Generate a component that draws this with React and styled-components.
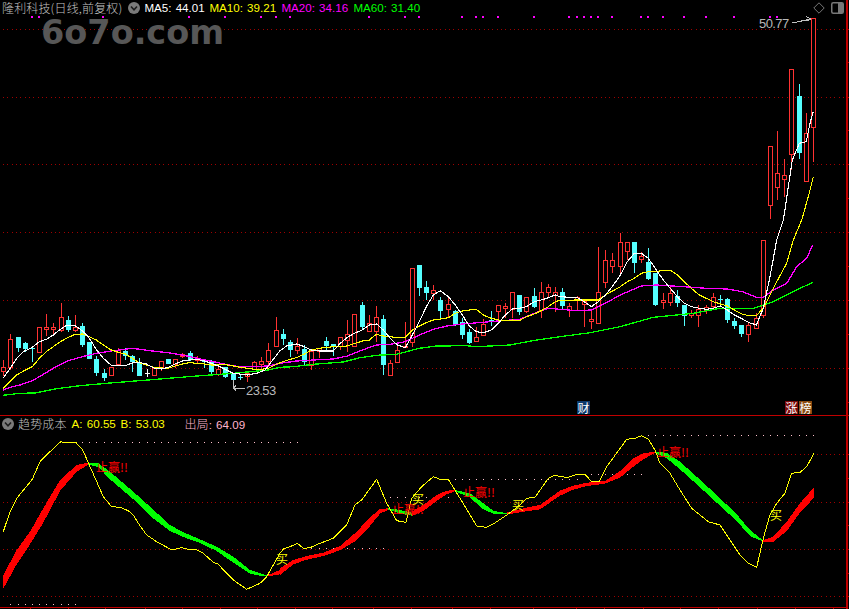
import React from 'react';
import styled, { createGlobalStyle } from 'styled-components';

const RED = '#ff3232';
const CYAN = '#54ffff';
const GRID = '#a00000';
const AXIS = '#c00000';
const CJK = '"Noto Sans CJK SC", "Liberation Sans", sans-serif';
const LATIN = '"Liberation Sans", "Noto Sans CJK SC", sans-serif';

const candleX = i => Math.round(3.33 + i * 7.165);

// all chart data was read off 3x crops, so each run keeps the crop origin
const crop = (ox, oy, list) => list.map(([x, ...ys]) => [ox + x / 3, ...ys.map(y => oy + y / 3)]);

const candleRuns = [
    [290, [
        ['R',210,258,232,245],['R',132,240,148,232],['C',140,185,140,175],['C',155,185,160,178],['C',170,215,173,178],
        ['R',112,188,112,188],['R',72,138,112,118],['R',98,135,112,117],['R',40,125,82,122],['C',78,125,90,120],
        ['R',75,125,112,120],['C',100,170,108,165],['C',155,208,155,206],['C',197,258,207,248],['C',238,272,250,264],
        ['R',232,255,232,255],['R',175,222,182,222],['C',175,210,182,197],['C',195,247,198,216],['C',205,258,220,258],
        ['W',238,262,250,251],['R',232,255,235,255],['R',212,242,214,234],['C',207,222,207,222],['R',207,235,208,222],
        ['R',190,203,193,200],['C',183,212,188,210],['R',198,218,207,210],['C',208,234,213,215],['C',210,258,212,246],
        ['R',222,258,238,252],['C',230,265,232,262],['C',250,298,250,270],['C',255,270,260,262],['R',248,275,250,260],
        ['R',213,240,218,238],['R',200,240,214,224],['R',160,230,181,215],['R',82,168,120,168],
    ]],
    [250, [
        ['C',237,285,252,267],['C',270,320,276,300],['R',265,312,289,302],['C',285,345,297,335],['R',320,360,305,345],
        ['R',295,325,295,305],['C',262,300,273,288],['C',282,318,282,288],['R',262,300,262,290],['R',210,305,253,272],
        ['R',193,290,193,290],['C',156,238,165,232],['R',195,245,220,243],['R',168,275,202,245],['C',195,375,207,345],
        ['R',330,378,340,377],['R',285,340,301,338],['R',215,295,290,292],['R',55,290,55,277],['C',45,138,45,113],
        ['C',93,150,111,128],['R',105,150,122,131],['C',140,205,150,182],['R',145,200,163,179],['C',180,228,182,225],
        ['C',205,268,217,255],['C',237,282,247,278],['R',232,275,262,275],['R',208,258,222,256],['C',183,228,210,212],
        ['R',165,210,165,185],['R',158,205,169,175],['R',125,205,127,177],['C',135,195,135,185],['R',142,190,142,185],
        ['C',113,175,138,170],['R',97,203,127,182],['R',103,145,112,128],['R',112,185,127,137],
    ]],
    [220, [
        ['C',205,268,216,258],['R',250,290,260,270],['R',228,270,232,240],['R',238,320,243,253],['R',270,327,298,305],
        ['R',82,310,217,310],['R',90,205,121,188],['R',98,160,121,139],['R',40,165,67,140],['R',67,120,67,95],
        ['C',67,158,67,128],['R',95,130,108,117],['C',83,180,126,177],['C',160,258,160,255],['R',218,267,240,248],
        ['R',195,257,220,248],['C',210,262,227,248],['C',255,317,255,288],['R',270,295,279,287],['R',255,320,267,287],
        ['R',255,282,262,272],['R',220,268,232,258],['C',225,250,238,241],['C',235,310,237,300],['C',295,327,303,318],
        ['C',315,350,315,342],['R',308,365,315,344],['R',280,327,295,326],['R',60,295,60,285],
    ]],
    [0, [
        ['R',438,657,438,617],['R',393,600,520,563],['R',477,590,525,537],['R',207,510,208,463],['C',252,477,288,460],
        ['R',340,545,400,545],['R',55,487,55,383],
    ]],
];

const candles = candleRuns
    .flatMap(([oy, rows]) => rows.map(([kind, ...ys]) => [kind, ...ys.map(y => oy + y / 3)]))
    .map(([kind, high, low, top, bottom], i) => ({ kind, high, low, top, bottom, x: candleX(i) }));

const ma5 = [
    ...crop(0, 290, [[10,265],[30,235],[50,205],[70,185],[97,172],[118,155],[139,148],[160,135],[181,118],[200,106],[226,108],[247,122],[265,140],[290,180],[310,205],[334,226],[376,227],[397,219],[418,217],[439,222],[463,235],[484,237],[505,232],[526,222],[547,213],[568,210],[592,208],[613,213],[634,220],[655,228],[676,238],[700,250],[742,255],[770,250],[795,240]]),
    ...crop(280, 250, [[0,302],[20,288],[50,282],[73,290],[94,300],[118,303],[160,303],[181,280],[202,262],[223,250],[247,240],[268,225],[290,222],[310,240],[331,265],[352,285],[376,293],[397,255],[418,215],[439,170],[460,135],[481,122],[505,140],[526,165],[547,195],[568,228],[589,245],[610,248],[634,240],[655,220],[676,195],[697,177],[718,175],[739,170],[763,155],[784,150],[805,143],[826,135]]),
    ...crop(560, 220, [[0,230],[52,233],[73,245],[94,260],[115,245],[136,225],[157,200],[181,165],[202,125],[223,100],[244,100],[265,115],[289,150],[310,180],[331,205],[352,230],[373,250],[394,260],[418,265],[439,268],[460,265],[481,258],[502,270],[523,285],[547,297],[568,308],[589,315],[610,265],[630,170],[650,60],[670,0]]),
    ...crop(730, 0, [[165,630],[175,560],[187,480],[208,430],[229,425],[240,370],[250,335]]),
];

const ma10 = [
    ...crop(0, 290, [[10,295],[30,275],[50,255],[76,240],[97,230],[118,205],[139,185],[160,170],[181,155],[205,142],[226,133],[247,132],[268,140],[289,150],[310,165],[334,180],[355,187],[376,192],[397,205],[418,218],[439,225],[463,232],[484,234],[505,235],[526,228],[547,222],[568,218],[592,220],[613,222],[634,225],[655,225],[676,224],[700,228],[721,232],[742,235],[763,238],[784,238],[805,235]]),
    ...crop(280, 250, [[0,338],[31,328],[52,322],[73,312],[94,300],[118,295],[160,290],[202,288],[247,273],[268,270],[289,253],[310,258],[331,260],[352,263],[376,262],[397,240],[418,228],[439,218],[460,210],[481,207],[505,203],[526,190],[547,183],[568,180],[589,178],[610,195],[634,205],[655,210],[676,212],[697,210],[718,212],[739,200],[763,192],[784,182],[805,170],[826,155]]),
    ...crop(560, 220, [[0,241],[52,240],[115,240],[136,225],[181,200],[202,185],[223,175],[244,160],[265,155],[289,155],[310,151],[331,151],[352,165],[373,185],[394,205],[418,225],[439,235],[460,245],[481,252],[502,258],[523,270],[547,283],[568,287],[589,287],[610,265],[630,225],[650,185],[680,130],[700,60],[725,0]]),
    ...crop(730, 0, [[235,590],[250,530]]),
];

const ma20 = [
    ...crop(0, 290, [[10,300],[30,292],[60,285],[97,272],[118,260],[160,235],[205,212],[247,200],[289,190],[334,183],[397,175],[450,182],[505,188],[547,195],[592,205],[655,218],[700,228],[742,230],[805,228]]),
    ...crop(280, 250, [[0,340],[50,333],[100,330],[160,327],[202,318],[247,300],[289,285],[331,283],[376,275],[418,255],[460,238],[505,227],[547,222],[610,217],[655,213],[718,208],[763,190],[805,175]]),
    ...crop(560, 220, [[0,268],[50,272],[94,270],[136,250],[181,225],[244,198],[289,195],[373,200],[439,205],[502,207],[547,215],[589,232],[610,232],[640,210],[680,190],[710,140],[740,115],[758,75]]),
];

const ma60 = [
    ...crop(0, 290, [[10,316],[60,310],[105,309],[170,296],[240,287],[330,279],[418,272],[505,265],[592,258],[700,250],[805,240]]),
    ...crop(280, 250, [[0,352],[40,350],[100,343],[190,336],[240,323],[290,316],[350,313],[418,295],[470,288],[560,287],[590,290],[690,285],[770,270]]),
    ...crop(560, 220, [[0,350],[90,338],[180,320],[280,292],[400,280],[480,265],[580,265],[640,245],[700,215],[758,187]]),
];

const trendLine = [
    ...crop(0, 400, [[10,395],[30,335],[50,295],[75,265],[97,238],[120,185],[150,155],[182,125],[195,128],[228,128],[248,150],[268,195],[290,245],[310,290],[335,320],[360,322],[385,332],[400,345],[415,370],[440,405],[470,425],[510,447],[525,448],[545,443],[565,448],[590,450],[610,460],[640,487],[655,492],[670,510],[700,540],[740,568],[780,550],[800,530]]),
    ...crop(280, 440, [[0,340],[10,327],[30,320],[52,310],[70,325],[90,323],[120,310],[160,295],[200,255],[225,195],[245,180],[290,118],[320,190],[350,242],[378,247],[395,175],[425,140],[460,110],[480,118],[505,118],[540,175],[590,258],[620,262],[640,252],[680,225],[720,195],[740,175],[765,172],[805,115],[825,105]]),
    ...crop(560, 395, [[0,245],[25,247],[50,238],[75,238],[95,260],[118,260],[140,215],[200,133],[225,130],[245,122],[265,132],[285,165],[300,205],[330,235],[360,285],[395,340],[445,380],[480,390],[540,480],[565,505],[590,517],[610,430],[630,360],[650,325],[675,295],[695,235],[720,232],[740,215],[762,175]]),
];

const bands = [
    { up: true, pts: crop(0, 400, [[10,525,566],[50,450,493],[90,395,433],[130,325,368],[180,240,273],[230,195,215],[265,188,194]]) },
    { up: false, pts: crop(0, 400, [[265,188,194],[295,190,201],[330,215,238],[400,275,298],[450,320,348],[510,375,393],[550,397,411],[600,418,429],[650,440,453],[700,470,488],[750,510,521],[790,523,529],[805,526,529]]) },
    { up: true, pts: [...crop(0, 400, [[805,525,529],[840,510,523]]), ...crop(280, 440, [[0,385,405],[40,360,373],[80,348,359],[130,338,348],[180,318,331],[230,275,301],[270,232,258],[300,207,221],[325,205,209]])] },
    { up: false, pts: crop(280, 440, [[325,205,209],[360,210,221],[395,218,227]]) },
    { up: true, pts: crop(280, 440, [[395,215,228],[430,195,213],[470,165,183],[500,152,163],[525,150,154]]) },
    { up: false, pts: crop(280, 440, [[525,150,154],[570,160,173],[610,190,208],[640,212,221],[680,220,223]]) },
    { up: true, pts: [...crop(280, 440, [[680,218,224],[730,205,215],[780,195,208]]), ...crop(560, 395, [[0,287,302],[40,272,284],[80,263,273],[135,258,266],[180,228,248],[220,190,215],[250,175,193],[285,170,174]])] },
    { up: false, pts: crop(560, 395, [[285,170,174],[320,173,190],[360,200,223],[410,245,268],[470,300,323],[530,358,378],[570,405,423],[610,437,440]]) },
    { up: true, pts: crop(560, 395, [[610,436,440],[640,425,440],[680,380,408],[720,325,353],[762,277,308]]) },
];

// pale stop-price dots: one dot per candle at a fixed level
const stopRuns = [
    { y: 442, from: 81, to: 303 }, { y: 604, from: 7, to: 75 }, { y: 548, from: 309, to: 383 },
    { y: 497, from: 389, to: 448 }, { y: 479, from: 454, to: 583 }, { y: 474, from: 590, to: 641 },
    { y: 435, from: 647, to: 813 },
];

const signalDots = [32, 39, 103, 189, 225, 261, 276, 290, 369, 405, 419, 462, 476, 483, 498, 534, 569, 577, 584, 591, 598, 612, 641, 648, 663, 684, 706, 734, 770, 777];

const priceGrid = [29, 97, 164, 232, 300, 368];
const priceTicks = [29, 62, 97, 130, 164, 198, 232, 266, 300, 334, 368, 402];
const costGrid = [454, 502, 549, 596];
const costTicks = [454, 478, 502, 525, 549, 573, 596];
const dateTicks = [30, 68, 105, 145, 182, 220, 257, 295, 332, 373, 411, 452, 490, 533, 576, 604, 643, 680, 718, 757, 795, 833];

const winLabels = [[96, 472], [392, 514], [463, 497], [657, 457]];
const buyLabels = [[276, 564], [412, 504], [512, 510], [770, 520]];

const toPoints = list => list.map(([x, y]) => `${x.toFixed(1)},${y.toFixed(1)}`).join(' ');

// grid dots sit about 4.33px apart, a plain dash array smears them
const dottedRow = y => Array.from({ length: 195 }, (_, i) => `M${Math.round(3 + i * 4.33)} ${y + 0.5}h1`).join('');

const GlobalStyle = createGlobalStyle`
    html, body {
        margin: 0;
        padding: 0;
        background: #000;
    }
`;

const Terminal = styled.div`
    width: 849px;
    height: 609px;
    background: #000;
    overflow: hidden;
    display: grid;
    grid-template-rows: 416px 193px;
`;

const Panel = styled.section`
    position: relative;
    border-bottom: ${props => props.$ruled ? `1px solid ${AXIS}` : 'none'};
`;

const Chart = styled.svg`
    display: block;
    width: 849px;
    height: ${props => props.$height}px;
    shape-rendering: crispEdges;
`;

const Legend = styled.div`
    position: absolute;
    top: ${props => props.$top}px;
    left: 2px;
    right: 0;
    height: 14px;
    display: flex;
    align-items: center;
    font-size: 12px;
    line-height: 14px;
    white-space: nowrap;
`;

const Title = styled.span`
    font-family: ${CJK};
    font-weight: 300;
    letter-spacing: 0.15px;
    color: #c0c0c0;
    margin-left: ${props => props.$gap || 0}px;
`;

const Reading = styled.span`
    font-family: ${LATIN};
    font-size: 11.6px;
    color: ${props => props.$color};
    margin-left: ${props => props.$gap}px;
    width: ${props => props.$width}px;
    word-spacing: 1px;
`;

const CjkLabel = styled.span`
    font-family: ${CJK};
    font-size: 12px;
    font-weight: 300;
`;

const RoundToggle = styled.svg`
    width: 12px;
    height: 12px;
    margin-left: ${props => props.$gap}px;
    flex: none;
`;

const WindowIcons = styled.div`
    margin-left: auto;
    margin-right: 5px;
    display: flex;
    align-items: center;
    gap: 6px;
`;

const Watermark = styled.div`
    position: absolute;
    top: 19px;
    left: 41px;
    font-family: "DejaVu Sans", sans-serif;
    font-weight: 700;
    font-size: 33.5px;
    line-height: 28px;
    color: #575757;
`;

const EventTags = styled.div`
    position: absolute;
    top: 401px;
    height: 13px;
    left: ${props => props.$left}px;
    display: flex;
    gap: 1px;
`;

const EventTag = styled.span`
    width: 13px;
    height: 13px;
    font-family: ${CJK};
    font-size: 12px;
    line-height: 13px;
    text-align: center;
    color: #fff;
    background: ${props => props.$bg};
`;

const PriceNote = styled.text`
    font-family: ${LATIN};
    font-size: 13px;
    letter-spacing: -0.6px;
    fill: #b8b8b8;
`;

const SignalText = styled.text`
    font-family: ${CJK};
    font-size: 12px;
    fill: ${props => props.$color};
`;

const Candle = ({ kind, x, high, low, top, bottom }) => {
    const mid = x + 0.5;
    if (kind === 'C') {
        return (
            <g>
                <line x1={mid} x2={mid} y1={high} y2={low} stroke={CYAN} />
                <rect x={x - 2} y={top} width={5} height={Math.max(bottom - top, 1)} fill={CYAN} />
            </g>
        );
    }
    if (kind === 'W') {
        return (
            <g stroke="#fff">
                <line x1={mid} x2={mid} y1={high} y2={low} />
                <line x1={x - 2} x2={x + 3} y1={top} y2={top} />
            </g>
        );
    }
    return (
        <g stroke={RED}>
            <line x1={mid} x2={mid} y1={high} y2={top} />
            <line x1={mid} x2={mid} y1={bottom} y2={low} />
            <rect x={x - 1.5} y={top} width={4} height={Math.max(bottom - top, 1)} fill="#000" />
        </g>
    );
};

const Grid = ({ rows, ticks }) => (
    <g>
        {rows.map(y => <path key={y} d={dottedRow(y)} stroke={GRID} fill="none" />)}
        <line x1={847} x2={847} y1={0} y2={609} stroke={AXIS} strokeWidth={2} />
        {ticks.map(y => (
            <line key={y} x1={847} x2={849} y1={y + 0.5} y2={y + 0.5} stroke={AXIS} />
        ))}
    </g>
);

const Toggle = ({ gap }) => (
    <RoundToggle $gap={gap} viewBox="0 0 12 12">
        <circle cx="6" cy="6" r="6" fill="#7a7a7a" />
        <path d="M3 4.5 6 7.8 9 4.5" fill="none" stroke="#1c1c1c" strokeWidth="1.6" />
    </RoundToggle>
);

const PriceChart = () => (
    <Chart $height={415} viewBox="0 0 849 415">
        <Grid rows={priceGrid} ticks={priceTicks} />
        {signalDots.map(x => <rect key={x} x={x - 1} y={16} width={2} height={2} fill="#ff00ff" />)}
        {candles.map(c => <Candle key={c.x} {...c} />)}
        <polyline points={toPoints(ma60)} fill="none" stroke="#00ff00" strokeWidth={1.3} />
        <polyline points={toPoints(ma20)} fill="none" stroke="#ff00ff" strokeWidth={1.3} />
        <polyline points={toPoints(ma10)} fill="none" stroke="#ffff00" strokeWidth={1.1} />
        <polyline points={toPoints(ma5)} fill="none" stroke="#fff" strokeWidth={1.1} />
        <PriceNote x={759} y={28}>50.77</PriceNote>
        <path d="M792 23 811 19M806 16.5 811 19 806 21" fill="none" stroke="#c0c0c0" />
        <PriceNote x={246} y={395}>23.53</PriceNote>
        <path d="M233.5 380V388H245M233.5 388 236 385.5M233.5 388 236 390.5" fill="none" stroke="#c0c0c0" />
    </Chart>
);

const CostChart = () => (
    <Chart $height={193} viewBox="0 416 849 193">
        <Grid rows={costGrid} ticks={costTicks} />
        <line x1={0} x2={847} y1={607.5} y2={607.5} stroke={AXIS} />
        {dateTicks.map(x => <line key={x} x1={x + 0.5} x2={x + 0.5} y1={607} y2={609} stroke={AXIS} />)}
        {stopRuns.flatMap(run =>
            candles
                .filter(c => c.x >= run.from && c.x <= run.to)
                .map(c => <rect key={`${run.y}-${c.x}`} x={c.x} y={run.y} width={1} height={1} fill="#ffc0cb" />)
        )}
        {bands.map((band, i) => (
            <polygon
                key={i}
                points={toPoints([...band.pts.map(([x, t]) => [x, t]), ...[...band.pts].reverse().map(([x, , b]) => [x, b])])}
                fill={band.up ? '#ff0000' : '#00ff00'}
            />
        ))}
        <polyline points={toPoints(trendLine)} fill="none" stroke="#ffff00" />
        {winLabels.map(([x, y]) => <SignalText key={x} x={x} y={y} $color="#ff0000">止赢!!</SignalText>)}
        {buyLabels.map(([x, y]) => <SignalText key={x} x={x} y={y} $color="#ffff00">买</SignalText>)}
    </Chart>
);

const App = () => (
    <>
        <GlobalStyle />
        <Terminal>
            <Panel $ruled>
                <PriceChart />
                <Watermark>6o7o.com</Watermark>
                <Legend $top={1}>
                    <Title>隆利科技(日线,前复权)</Title>
                    <Toggle gap={6} />
                    <Reading $color="#fff" $gap={4} $width={61}>MA5: 44.01</Reading>
                    <Reading $color="#ffff00" $gap={4} $width={68}>MA10: 39.21</Reading>
                    <Reading $color="#ff00ff" $gap={4} $width={68}>MA20: 34.16</Reading>
                    <Reading $color="#00ff00" $gap={4} $width={68}>MA60: 31.40</Reading>
                    <WindowIcons>
                        <svg width="12" height="12" viewBox="0 0 12 12">
                            <path d="M6 .8 11.2 6 6 11.2 .8 6Z" fill="none" stroke="#777" />
                        </svg>
                        <svg width="13" height="12" viewBox="0 0 13 12">
                            <rect x=".75" y=".75" width="11.5" height="10.5" rx="1.5" fill="none" stroke="#777" strokeWidth="1.5" />
                            <rect x="7" y="1" width="5" height="10" fill="#777" />
                        </svg>
                    </WindowIcons>
                </Legend>
                <EventTags $left={577}>
                    <EventTag $bg="#0c3a6c">财</EventTag>
                </EventTags>
                <EventTags $left={785}>
                    <EventTag $bg="#7c0a0a">涨</EventTag>
                    <EventTag $bg="#8a4a10">榜</EventTag>
                </EventTags>
            </Panel>
            <Panel>
                <CostChart />
                <Legend $top={1}>
                    <Toggle gap={0} />
                    <Title $gap={4}>趋势成本</Title>
                    <Reading $color="#ffff00" $gap={5} $width={44}>A: 60.55</Reading>
                    <Reading $color="#ffff00" $gap={5} $width={44}>B: 53.03</Reading>
                    <Reading $color="#ffb4cc" $gap={20} $width={62}><CjkLabel>出局</CjkLabel>: 64.09</Reading>
                </Legend>
            </Panel>
        </Terminal>
    </>
);

export default App;
